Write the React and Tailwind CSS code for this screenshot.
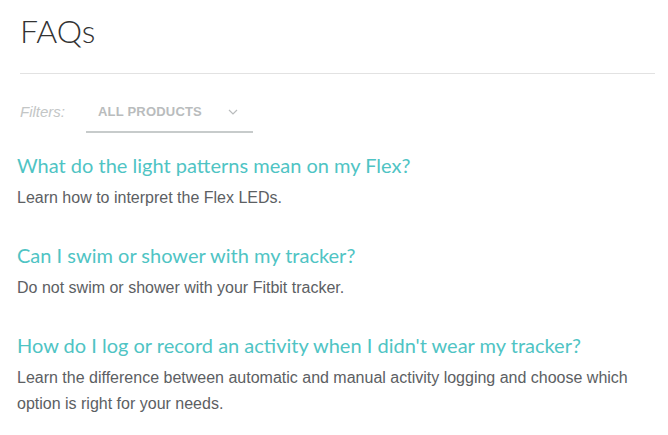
import React from "react";

const faqs = [
  {
    q: "What do the light patterns mean on my Flex?",
    a: "Learn how to interpret the Flex LEDs.",
  },
  {
    q: "Can I swim or shower with my tracker?",
    a: "Do not swim or shower with your Fitbit tracker.",
  },
  {
    q: "How do I log or record an activity when I didn't wear my tracker?",
    a: "Learn the difference between automatic and manual activity logging and choose which option is right for your needs.",
  },
];

export default function App() {
  return (
    <div className="w-[668px] h-[435px] bg-white overflow-hidden">
      <div className="pl-[20px] pr-[13px] pt-[12px]">
        <h1 className="text-[32px] leading-[38px] text-[#333] font-light" style={{ fontFamily: "Lato, 'Open Sans', sans-serif" }}>
          FAQs
        </h1>
        <div className="mt-[23px] h-px bg-[#e2e2e2]" />
        <div className="mt-[27px] flex items-center" style={{ fontFamily: "'Liberation Sans', Arial, sans-serif" }}>
          <span className="italic text-[15px] text-[#c3c6c6] w-[66px] -mt-[9px]">Filters:</span>
          <div className="flex items-center w-[167px] border-b-2 border-[#c7cbcb] pb-[9px] pt-[1px] pl-[12px]">
            <span className="font-bold text-[13px] text-[#b9bcbd] tracking-[0.2px]">ALL PRODUCTS</span>
            <svg className="ml-[26px]" width="10" height="6" viewBox="0 0 10 6" fill="none">
              <path d="M1 1l4 4 4-4" stroke="#b9bcbd" strokeWidth="1.2" />
            </svg>
          </div>
        </div>
      </div>
      <div className="pl-[17px] pr-[13px] mt-[20px] flex flex-col gap-[32px]">
        {faqs.map((f) => (
          <div key={f.q}>
            <div className="text-[20px] leading-[24px] text-[#4fc4c4]" style={{ fontFamily: "Lato, 'Open Sans', sans-serif" }}>
              {f.q}
            </div>
            <div className="mt-[8px] text-[16px] leading-[26px] text-[#5c6063]" style={{ fontFamily: "'Liberation Sans', Arial, sans-serif" }}>
              {f.a}
            </div>
          </div>
        ))}
      </div>
    </div>
  );
}
